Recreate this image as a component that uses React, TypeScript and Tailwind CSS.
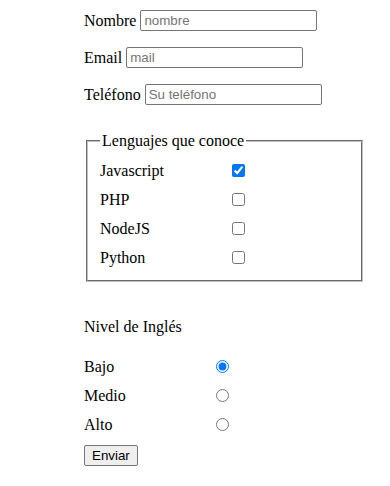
import React from "react";

const fieldInput =
  "w-[177px] h-[21px] border border-[#767676] rounded-[2px] px-[3px] text-[13.33px] font-['Liberation_Sans',Arial,sans-serif] placeholder:text-[#757575] outline-none";

const languages = [
  { name: "Javascript", checked: true },
  { name: "PHP", checked: false },
  { name: "NodeJS", checked: false },
  { name: "Python", checked: false },
];

const levels = ["Bajo", "Medio", "Alto"];

export default function App() {
  return (
    <div className="min-h-[486px] w-[390px] bg-white text-black font-['Liberation_Serif','Times_New_Roman',serif] text-[16px] pl-[84px] pt-[10px]">
      <form className="w-[281px]">
        <div className="flex items-center gap-[4px] h-[21px]">
          <label>Nombre</label>
          <input type="text" placeholder="nombre" className={fieldInput} />
        </div>
        <div className="flex items-center gap-[4px] h-[21px] mt-[16px]">
          <label>Email</label>
          <input type="text" placeholder="mail" className={fieldInput} />
        </div>
        <div className="flex items-center gap-[4px] h-[21px] mt-[16px]">
          <label>Teléfono</label>
          <input type="text" placeholder="Su teléfono" className={fieldInput} />
        </div>

        <fieldset className="mt-[27px] mx-[2px] border-2 border-[#c0c0c0] [border-style:groove] px-[12px] pt-[6px] pb-[8px]">
          <legend className="px-[2px] leading-[18px]">Lenguajes que conoce</legend>
          {languages.map((l) => (
            <div key={l.name} className="flex items-center h-[29px]">
              <label className="w-[132px]">{l.name}</label>
              <input type="checkbox" defaultChecked={l.checked} className="w-[13px] h-[13px] m-0" />
            </div>
          ))}
        </fieldset>

        <p className="mt-[36px] leading-[18px]">Nivel de Inglés</p>

        <div className="mt-[16px]">
          {levels.map((lv, i) => (
            <div key={lv} className="flex items-center h-[29px]">
              <label className="w-[132px]">{lv}</label>
              <input type="radio" name="nivel" defaultChecked={i === 0} className="w-[13px] h-[13px] m-0" />
            </div>
          ))}
        </div>

        <button
          type="button"
          className="mt-[6px] h-[21px] px-[7px] bg-[#efefef] border border-[#767676] rounded-[2px] text-[13.33px] font-['Liberation_Sans',Arial,sans-serif]"
        >
          Enviar
        </button>
      </form>
    </div>
  );
}
